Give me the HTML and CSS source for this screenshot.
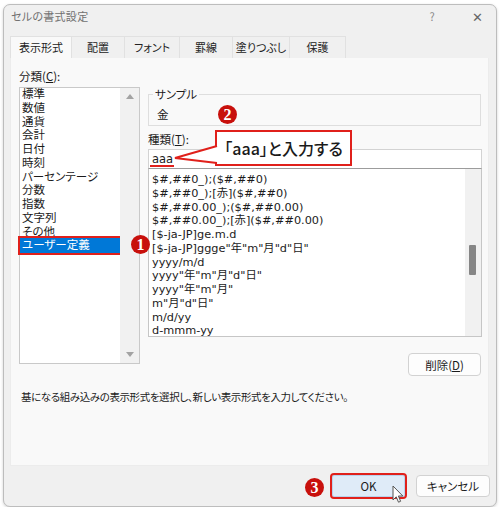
FILE: index.html
```html
<!DOCTYPE html>
<html lang="ja">
<head>
<meta charset="utf-8">
<title>セルの書式設定</title>
<link rel="stylesheet" href="styles.css">
</head>
<body>
<div class="dialog">
  <div class="titlebar">
    <span class="title">セルの書式設定</span>
    <span class="help">?</span>
    <span class="close">✕</span>
  </div>
  <div class="tabs">
    <div class="tab active w1">表示形式</div>
    <div class="tab w2">配置</div>
    <div class="tab w3">フォント</div>
    <div class="tab w4">罫線</div>
    <div class="tab w5">塗りつぶし</div>
    <div class="tab w6">保護</div>
  </div>
  <div class="panel">
    <div class="columns">
      <div class="leftcol">
        <div class="label">分類(<u>C</u>):</div>
        <div class="catlist">
          <div class="items">
            <div class="item">標準</div>
            <div class="item">数値</div>
            <div class="item">通貨</div>
            <div class="item">会計</div>
            <div class="item">日付</div>
            <div class="item">時刻</div>
            <div class="item">パーセンテージ</div>
            <div class="item">分数</div>
            <div class="item">指数</div>
            <div class="item">文字列</div>
            <div class="item">その他</div>
            <div class="item selected">ユーザー定義</div>
          </div>
          <div class="vscroll">
            <span class="arrow up"></span>
            <span class="arrow down"></span>
          </div>
        </div>
      </div>
      <div class="rightcol">
        <fieldset class="sample">
          <legend>サンプル</legend>
          <div class="sample-value">金</div>
        </fieldset>
        <div class="label kind">種類(<u>T</u>):</div>
        <div class="input">aaa</div>
        <div class="fmtlist">
          <div class="fmtitems">
            <div class="fitem">$#,##0_);($#,##0)</div>
            <div class="fitem">$#,##0_);[赤]($#,##0)</div>
            <div class="fitem">$#,##0.00_);($#,##0.00)</div>
            <div class="fitem">$#,##0.00_);[赤]($#,##0.00)</div>
            <div class="fitem">[$-ja-JP]ge.m.d</div>
            <div class="fitem">[$-ja-JP]ggge"年"m"月"d"日"</div>
            <div class="fitem">yyyy/m/d</div>
            <div class="fitem">yyyy"年"m"月"d"日"</div>
            <div class="fitem">yyyy"年"m"月"</div>
            <div class="fitem">m"月"d"日"</div>
            <div class="fitem">m/d/yy</div>
            <div class="fitem">d-mmm-yy</div>
          </div>
          <div class="fscroll"><div class="thumb"></div></div>
        </div>
        <div class="delrow"><button class="btn del">削除(<u>D</u>)</button></div>
      </div>
    </div>
    <div class="desc">基になる組み込みの表示形式を選択し、新しい表示形式を入力してください。</div>
  </div>
  <div class="footer">
    <button class="btn ok">OK</button>
    <button class="btn cancel">キャンセル</button>
  </div>

  <div class="underline"></div>
  <svg class="tail" width="54" height="35" viewBox="0 0 54 35">
    <polygon points="49,6 5,18 49,23" fill="#fff"/>
    <polyline points="47,6 5,18 47,23" fill="none" stroke="#e0201b" stroke-width="2" stroke-linejoin="miter"/>
  </svg>
  <div class="callout">「aaa」と入力する</div>
  <div class="num n1">1</div>
  <div class="num n2">2</div>
  <div class="num n3">3</div>
  <svg class="cursor" width="12" height="19" viewBox="0 0 12 19">
    <path d="M1 1 L1 15 L4.2 11.8 L6.5 17.2 L8.6 16.3 L6.4 11 L10.8 11 Z" fill="#fff" stroke="#555" stroke-width="1" stroke-linejoin="round"/>
  </svg>
</div>
</body>
</html>
```

FILE: styles.css
```css
* { box-sizing: border-box; }
html, body { margin: 0; padding: 0; background: #ffffff; }
body {
  font-family: "Noto Sans CJK JP", "Noto Sans", sans-serif;
  font-feature-settings: "palt";
  color: #1b1b1b;
  font-size: 11.5px;
}
u { text-decoration: underline; text-underline-offset: 1px; }

.dialog {
  position: relative;
  margin: 4px 0 0 3px;
  width: 494px;
  height: 503px;
  border: 1px solid #bdbdbd;
  border-radius: 7px;
  background: #f0f0f0;
  box-shadow: 0 1px 3px rgba(0,0,0,0.18);
  display: flex;
  flex-direction: column;
}

.titlebar {
  height: 22px;
  display: flex;
  align-items: center;
  padding-left: 7px;
}
.title { font-size: 11px; color: #707070; letter-spacing: 0.3px; flex: 1; }
.help { font-size: 11px; color: #8a8a8a; width: 12px; margin-right: 32px; text-align: center; }
.close { font-size: 13px; color: #666; width: 14px; margin-right: 12px; text-align: center; }

.tabs {
  margin-top: 9px;
  margin-left: 6px;
  height: 22px;
  display: flex;
}
.tab {
  height: 22px;
  font-size: 11px;
  line-height: 21px;
  text-align: center;
  border: 1px solid #e1e1e1;
  border-bottom: none;
  border-left: none;
  background: #f0f0f0;
  color: #222;
}
.tab.active { background: #f9f9f9; border-left: 1px solid #e1e1e1; }
.w1 { width: 62px; }
.w2 { width: 53px; }
.w3 { width: 55px; }
.w4 { width: 53px; }
.w5 { width: 57px; }
.w6 { width: 56px; }

.panel {
  margin: 0 7px 0 6px;
  height: 408px;
  background: #f9f9f9;
  border: 1px solid #ececec;
  border-top: none;
  display: flex;
  flex-direction: column;
  padding-left: 8px;
}
.columns { display: flex; gap: 8px; align-items: flex-start; }

.label { line-height: 14px; font-size: 11.5px; }
.leftcol { width: 121px; padding-top: 11px; }
.leftcol .label { margin-bottom: 4px; }

.catlist {
  height: 277px;
  border: 1px solid #c9c9c9;
  background: #fff;
  display: flex;
}
.items { width: 100px; }
.item {
  height: 13.75px;
  line-height: 13.75px;
  padding-left: 2px;
  white-space: nowrap;
  font-family: "Liberation Sans", "Noto Sans CJK JP", sans-serif;
  font-size: 11.5px;
}
.item.selected {
  background: #0078d7;
  color: #fff;
  outline: 2px solid #e0201b;
  height: 15px;
  line-height: 15px;
  margin-top: -1px;
}
.vscroll {
  width: 19px;
  background: #f1f1f1;
  display: flex;
  flex-direction: column;
  justify-content: space-between;
  align-items: center;
  padding: 6px 0 6px;
}
.arrow { width: 0; height: 0; border-left: 4px solid transparent; border-right: 4px solid transparent; }
.arrow.up { border-bottom: 5px solid #a3a3a3; }
.arrow.down { border-top: 5px solid #a3a3a3; }

.rightcol { width: 334px; padding-top: 29px; }
.sample {
  margin: 0;
  padding: 6px 8px 4px;
  border: 1px solid #dedede;
  width: 333px;
}
.sample legend {
  font-size: 11.5px;
  line-height: 14px;
  padding: 0 2px;
  margin-left: -4px;
}
.sample-value { line-height: 14px; }
.kind { margin-top: 6px; }
.input {
  margin-top: 3px;
  height: 19px;
  border: 1px solid #d3d3d3;
  border-bottom: none;
  background: #fff;
  font-family: "DejaVu Sans", "Noto Sans CJK JP", sans-serif;
  font-size: 11.5px;
  line-height: 18px;
  padding-left: 3px;
}
.fmtlist {
  height: 169px;
  border: 1px solid #c6c6c6;
  border-top: 1px solid #9c9c9c;
  background: #fff;
  display: flex;
}
.fmtitems { flex: 1; padding-top: 4px; padding-left: 3px; }
.fitem {
  height: 13.75px;
  line-height: 13.75px;
  white-space: nowrap;
  font-family: "DejaVu Sans", "Noto Sans CJK JP", sans-serif;
  font-size: 11.3px;
}
.fscroll { width: 16px; background: #f1f1f1; }
.thumb { width: 7px; height: 30px; margin: 76px 0 0 4px; background: #868686; border-radius: 1px; }

.delrow { display: flex; justify-content: flex-end; margin-top: 16px; padding-right: 1px; }
.btn {
  font-family: "Noto Sans CJK JP", sans-serif;
  font-feature-settings: "palt";
  font-size: 11.5px;
  color: #1b1b1b;
  background: #fdfdfd;
  border: 1px solid #d2d2d2;
  border-radius: 4px;
  padding: 0;
}
.del { width: 73px; height: 23px; }

.desc {
  margin-top: 14px;
  margin-left: 2px;
  line-height: 14px;
  font-size: 10.5px;
  letter-spacing: -0.4px;
}

.footer {
  display: flex;
  justify-content: flex-end;
  gap: 11px;
  padding-top: 9px;
  padding-right: 6px;
}
.ok {
  width: 73px; height: 22px;
  background: #dfebf8;
  border-color: #b9d2ec;
  border-radius: 2px;
  outline: 2px solid #e0201b;
}
.cancel { width: 74px; height: 22px; }

/* annotations over the dialog */
.underline { position: absolute; left: 146px; top: 160px; width: 24px; height: 2px; background: #e0201b; }
.callout {
  position: absolute;
  left: 211px; top: 125px;
  width: 137px; height: 36px;
  border: 2px solid #e0201b;
  background: #fff;
  font-size: 16px;
  font-weight: 500;
  line-height: 32px;
  text-align: center;
  color: #1a1a1a;
  white-space: nowrap;
}
.tail { position: absolute; left: 166px; top: 135px; z-index: 2; }
.num {
  position: absolute;
  width: 19px; height: 19px;
  border-radius: 50%;
  background: #c8100c;
  color: #fff;
  font-family: "Liberation Serif", serif;
  font-weight: bold;
  font-size: 16px;
  line-height: 19px;
  text-align: center;
}
.n1 { left: 127px; top: 230px; }
.n2 { left: 214px; top: 100px; }
.n3 { left: 301px; top: 473px; }
.cursor { position: absolute; left: 388px; top: 480px; }
```
